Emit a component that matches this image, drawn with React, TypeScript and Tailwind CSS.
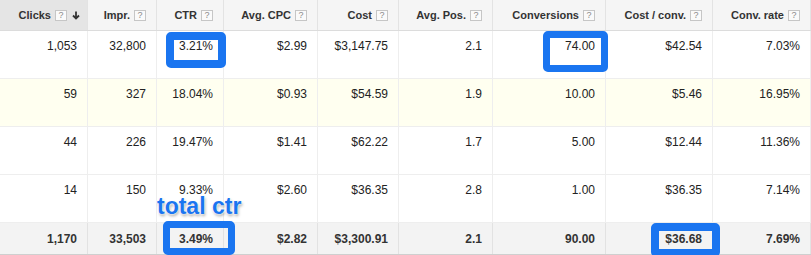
import React from "react"

const columns = [
  { label: "Clicks", width: 88, sorted: true },
  { label: "Impr.", width: 69 },
  { label: "CTR", width: 67 },
  { label: "Avg. CPC", width: 94 },
  { label: "Cost", width: 81 },
  { label: "Avg. Pos.", width: 94 },
  { label: "Conversions", width: 113 },
  { label: "Cost / conv.", width: 107 },
  { label: "Conv. rate", width: 98 },
]

const rows = [
  ["1,053", "32,800", "3.21%", "$2.99", "$3,147.75", "2.1", "74.00", "$42.54", "7.03%"],
  ["59", "327", "18.04%", "$0.93", "$54.59", "1.9", "10.00", "$5.46", "16.95%"],
  ["44", "226", "19.47%", "$1.41", "$62.22", "1.7", "5.00", "$12.44", "11.36%"],
  ["14", "150", "9.33%", "$2.60", "$36.35", "2.8", "1.00", "$36.35", "7.14%"],
]

const totals = ["1,170", "33,503", "3.49%", "$2.82", "$3,300.91", "2.1", "90.00", "$36.68", "7.69%"]

const gridCols = "grid grid-cols-[88px_69px_67px_94px_81px_94px_113px_107px_98px]"

function HelpBox() {
  return (
    <span className="ml-[4px] inline-flex h-[11px] w-[12px] items-center justify-center border border-[#c6c6c6] bg-[#fafafa] text-[9px] font-normal leading-none text-[#8a8a8a]">
      ?
    </span>
  )
}

function SortArrow() {
  return (
    <svg width="8" height="9" viewBox="0 0 8 9" className="ml-[5px]">
      <path d="M4 0.5 V7.5 M1 4.5 L4 7.5 L7 4.5" stroke="#333" strokeWidth="1.8" fill="none" />
    </svg>
  )
}

function Highlight({ className }: { className: string }) {
  return <div className={`absolute rounded-[5px] border-[#1a75f0] ${className}`} />
}

export default function App() {
  return (
    <div className="relative h-[255px] w-[811px] overflow-hidden bg-white font-['Liberation_Sans',Arial,sans-serif]">
      {/* Header */}
      <div className={`${gridCols} h-[31px] border-b border-[#dcdcdc] bg-[#f5f5f5]`}>
        {columns.map((col) => (
          <div
            key={col.label}
            className={`flex items-center justify-end border-r border-[#e3e3e3] text-[11px] font-bold text-[#333] ${
              col.sorted ? "bg-[#e5e5e5] pr-[7px]" : "pr-[10px]"
            }`}
          >
            {col.label}
            <HelpBox />
            {col.sorted && <SortArrow />}
          </div>
        ))}
      </div>

      {/* Rows */}
      {rows.map((row, i) => (
        <div
          key={i}
          className={`${gridCols} h-[48px] border-b border-[#eeeeee] ${i === 1 ? "bg-[#fffff0]" : "bg-white"}`}
        >
          {row.map((val, j) => (
            <div key={j} className="border-r border-[#eeeeee] pr-[10px] pt-[8px] text-right text-[12px] leading-[15px] text-[#222]">
              {val}
            </div>
          ))}
        </div>
      ))}

      {/* Total */}
      <div className={`${gridCols} h-[32px] border-b border-[#cfcfcf] bg-[#f3f3f3]`}>
        {totals.map((val, j) => (
          <div key={j} className="flex items-center justify-end border-r border-[#e2e2e2] pr-[10px] text-[12px] font-bold text-[#333]">
            {val}
          </div>
        ))}
      </div>

      {/* Annotations */}
      <Highlight className="left-[166px] top-[32px] h-[36px] w-[60px] border-[8px]" />
      <Highlight className="left-[543px] top-[31px] h-[41px] w-[65px] border-[7px]" />
      <Highlight className="left-[163px] top-[221px] h-[34px] w-[72px] border-[7px]" />
      <Highlight className="left-[651px] top-[223px] h-[34px] w-[69px] border-[8px]" />

      <div className="absolute left-[157px] top-[195px] text-[23px] font-bold leading-[22px] text-[#1a75f0] [text-shadow:0_0_2px_#fff,0_0_2px_#fff,1px_2px_3px_rgba(0,0,0,0.35)]">
        total ctr
      </div>
    </div>
  )
}
